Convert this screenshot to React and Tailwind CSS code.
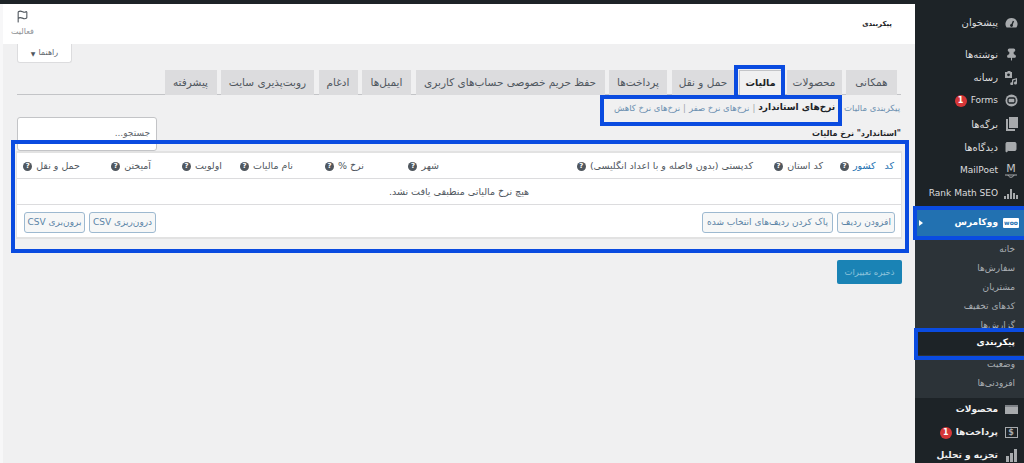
import { Flag, Pin, MessageSquare } from 'lucide-react';

const font = { fontFamily: '"DejaVu Sans", sans-serif' };

const tabs = [
  ['همکانی', 'w-[51px]'],
  ['محصولات', 'w-[55px]'],
  ['مالیات', 'w-[43px]', true],
  ['حمل و نقل', 'w-[63px]'],
  ['پرداخت‌ها', 'w-[58px]'],
  ['حفظ حریم خصوصی حساب‌های کاربری', 'w-[189px]'],
  ['ایمیل‌ها', 'w-[49px]'],
  ['ادغام', 'w-[39px]'],
  ['روبت‌پذیری سایت', 'w-[93px]'],
  ['پیشرفته', 'w-[52px]'],
];

const columns = [
  'کشور',
  'کد استان',
  'کدپستی (بدون فاصله و با اعداد انگلیسی)',
  'شهر',
  'نرخ %',
  'نام مالیات',
  'اولویت',
  'آمیختن',
  'حمل و نقل',
];

function HelpDot() {
  return (
    <span className="inline-flex size-[9px] shrink-0 items-center justify-center rounded-full bg-[#50575e] text-[7px] font-bold leading-none text-white">?</span>
  );
}

function OutlineButton({ children, className }) {
  return (
    <button className={`flex h-[21px] items-center justify-center rounded-[3px] border border-[#9db9d0] bg-[#f6f7f7] text-[9px] text-[#5b84a6] ${className}`}>
      {children}
    </button>
  );
}

function GaugeIcon() {
  return (
    <svg width="13" height="12" viewBox="0 0 13 12">
      <path d="M6.5 1A6 6 0 0 0 1.6 10.5h9.8A6 6 0 0 0 6.5 1z" fill="#a7aaad" />
      <path d="M6.5 8.5L8.5 4" stroke="#1d2327" strokeWidth="1.4" />
      <circle cx="6.5" cy="8.5" r="1.4" fill="#1d2327" />
    </svg>
  );
}

function MediaIcon() {
  return (
    <svg width="14" height="14" viewBox="0 0 14 14" fill="#a7aaad">
      <path d="M1 1h2l1-1h2l1 1h1v6H1z" />
      <circle cx="4.5" cy="3.8" r="1.4" fill="#1d2327" />
      <path d="M8 8.5l5-1.5v5a1.5 1.5 0 1 1-1.2-1.4V8.6L9.2 9.4v3.2A1.5 1.5 0 1 1 8 11.2z" />
    </svg>
  );
}

function PagesIcon() {
  return (
    <svg width="13" height="14" viewBox="0 0 13 14" fill="#a7aaad">
      <rect x="4" y="0" width="9" height="11" />
      <rect x="1" y="2" width="2" height="12" />
      <rect x="1" y="12" width="9" height="2" />
    </svg>
  );
}

function RankIcon() {
  return (
    <svg width="14" height="10" viewBox="0 0 14 10" fill="#a7aaad">
      <rect x="0" y="7" width="2" height="3" />
      <rect x="3" y="5" width="2" height="5" />
      <rect x="6" y="0" width="2" height="10" />
      <rect x="9" y="4" width="2" height="6" />
      <rect x="12" y="6" width="2" height="4" />
    </svg>
  );
}

function FormsIcon() {
  return (
    <svg width="13" height="13" viewBox="0 0 13 13">
      <circle cx="6.5" cy="6.5" r="6" fill="#a7aaad" />
      <rect x="3" y="4" width="7" height="5" rx="1.5" fill="none" stroke="#1d2327" strokeWidth="1.3" />
    </svg>
  );
}

function MailPoetIcon() {
  return (
    <span className="flex flex-col items-center text-[11px] leading-[11px] text-[#c3c4c7]">
      M
      <svg width="14" height="4" viewBox="0 0 14 4" fill="none" stroke="#a7aaad">
        <path d="M1 1h12M4 1c1 3 5 3 6 0" />
      </svg>
    </span>
  );
}

function MenuRow({ icon, label, className = 'h-[23.2px]', badge, bold, latin }) {
  return (
    <div
      dir="rtl"
      className={`flex shrink-0 items-center ${bold ? 'text-[9px] font-bold text-[#f0f0f1]' : latin ? 'text-[9px] text-[#dcdcde]' : 'text-[10px] text-[#dcdcde]'} ${className}`}
    >
      <span className="flex w-[26px] shrink-0 items-center justify-center text-[#a7aaad]">{icon}</span>
      <span className="whitespace-nowrap">{label}</span>
      {badge && (
        <span className="mr-[4px] flex size-[12px] items-center justify-center rounded-full bg-[#d63638] text-[8px] leading-none font-bold text-white">{badge}</span>
      )}
    </div>
  );
}

function SubRow({ label, active }) {
  return (
    <div
      dir="rtl"
      className={`flex shrink-0 items-center pr-[9px] text-[9px] ${active ? '-mt-[4px] h-[24px] bg-[#1d2327] font-bold text-white' : 'h-[19px] text-[#a9aeb3]'}`}
    >
      {label}
    </div>
  );
}

function Sidebar() {
  return (
    <aside className="relative flex h-full w-[109px] shrink-0 flex-col bg-[#1d2327] pt-[7px]">
      <MenuRow icon={<GaugeIcon />} label="پیشخوان" className="mb-[9px] h-[23px]" />
      <MenuRow icon={<Pin size={13} fill="#a7aaad" />} label="نوشته‌ها" />
      <MenuRow icon={<MediaIcon />} label="رسانه" />
      <MenuRow icon={<FormsIcon />} label="Forms" badge="1" latin />
      <MenuRow icon={<PagesIcon />} label="برگه‌ها" />
      <MenuRow icon={<MessageSquare size={12} fill="#a7aaad" />} label="دیدگاه‌ها" />
      <MenuRow icon={<MailPoetIcon />} label="MailPoet" latin />
      <MenuRow icon={<RankIcon />} label="Rank Math SEO" latin />
      <div dir="rtl" className="relative mt-[3.6px] flex h-[28px] shrink-0 items-center bg-[#2271b1] text-[9px] font-bold text-white">
        <span className="flex w-[26px] justify-center">
          <span className="rounded-[1px] bg-white px-[1px] text-[6px] leading-[10px] font-bold text-[#2271b1]">woo</span>
        </span>
        ووکامرس
        <span className="absolute left-[4px] top-[11px] size-0 border-y-[3px] border-l-[4px] border-y-transparent border-l-white" />
      </div>
      <div className="flex h-[161px] shrink-0 flex-col bg-[#2c3338] pt-[3px]">
        <SubRow label="خانه" />
        <SubRow label="سفارش‌ها" />
        <SubRow label="مشتریان" />
        <SubRow label="کدهای تخفیف" />
        <SubRow label="گزارش‌ها" />
        <SubRow label="پیکربندی" active />
        <SubRow label="وضعیت" />
        <SubRow label="افزودنی‌ها" />
      </div>
      <MenuRow
        icon={<span className="block h-[9px] w-[13px] border-t-[2px] border-[#7d8186] bg-[#a7aaad]" />}
        label="محصولات"
        className="h-[23px]"
        bold
      />
      <MenuRow
        icon={<span className="flex h-[11px] w-[13px] items-center justify-center border border-[#a7aaad] text-[8px] leading-none">$</span>}
        label="پرداخت‌ها"
        badge="1"
        bold
      />
      <MenuRow
        icon={
          <svg width="13" height="13" viewBox="0 0 13 13" fill="#a7aaad">
            <rect x="1" y="7" width="3" height="6" />
            <rect x="5" y="4" width="3" height="9" />
            <rect x="9" y="0" width="3" height="13" />
          </svg>
        }
        label="تجزیه و تحلیل"
        bold
      />
    </aside>
  );
}

function Main() {
  return (
    <main dir="rtl" className="flex h-full min-w-0 flex-1 flex-col bg-[#f0f0f1]">
      <header className="flex h-[40px] shrink-0 items-center justify-between bg-white pl-[8px] pr-[23px]">
        <span className="text-[7px] font-bold text-[#1d2327]">پیکربندی</span>
        <div className="flex flex-col items-center text-[#8c8f94]">
          <Flag size={13} color="#50575e" />
          <span className="mt-[3px] text-[8px]">فعالیت</span>
        </div>
      </header>

      <div className="flex justify-end pl-[14px]">
        <div className="flex h-[19px] w-[55px] items-center justify-center gap-[3px] rounded-b-[3px] border border-t-0 border-[#dcdcde] bg-white text-[8px] text-[#646970]">
          راهنما
          <span className="text-[6px] text-[#50575e]">▼</span>
        </div>
      </div>

      <nav className="mr-[14px] ml-[14px] mt-[7px] flex h-[25px] shrink-0 gap-[4.5px] border-b border-[#c3c4c7] pr-[4px]">
        {tabs.map(([label, width, active]) => (
          <div
            key={label}
            className={`flex h-[25px] items-center justify-center whitespace-nowrap border border-b-0 ${width} ${
              active ? 'border-[#c3c4c7] bg-[#f0f0f1] text-[9.5px] font-bold text-[#1d2327]' : 'border-[#dcdcde] bg-[#dcdcde] text-[10.5px] text-[#50575e]'
            }`}
          >
            {label}
          </div>
        ))}
      </nav>

      <div className="mt-[6px] flex h-[14px] items-center gap-[3px] whitespace-nowrap pr-[15px] text-[8.5px] text-[#6b8fb0]">
        <span>پیکربندی مالیات</span>
        <span className="text-[#a0a5aa]">|</span>
        <span className="text-[9px] font-bold text-[#1d2327]">نرخ‌های استاندارد</span>
        <span className="text-[#a0a5aa]">|</span>
        <span>نرخ‌های نرخ صفر</span>
        <span className="text-[#a0a5aa]">|</span>
        <span>نرخ‌های نرخ کاهش</span>
      </div>

      <div className="mr-[14px] ml-[14px] mt-[2px] flex h-[34px] shrink-0 items-start justify-between">
        <h2 className="mt-[11px] text-[8px] font-bold leading-[12px] text-[#1d2327]">"استاندارد" نرخ مالیات</h2>
        <div className="flex h-[34px] w-[140px] items-start rounded-[3px] border border-[#c3c4c7] bg-white pr-[6px] pt-[9px] text-[9px] text-[#646970]">
          جستجو...
        </div>
      </div>

      <section className="mr-[13px] ml-[13px] h-[88px] shrink-0 border-x border-y-2 border-[#e2e2e2] bg-white text-[9.5px] text-[#50575e]">
        <div className="grid h-[26px] grid-cols-[71px_70px_314px_75px_71px_71px_71px_71px_1fr] items-center border-b border-[#dcdcde] pr-[7px] pt-[1px]">
          {columns.map((col, i) => (
            <div key={col} className="flex items-center gap-[4px] whitespace-nowrap">
              {i === 0 && <span className="ml-[5px] text-[#2271b1]">کد</span>}
              <span className={i === 0 ? 'text-[#2271b1]' : ''}>{col}</span>
              <HelpDot />
            </div>
          ))}
        </div>
        <div className="flex h-[26px] items-center justify-center border-b border-[#dcdcde] pt-[2px]">
          هیچ نرخ مالیاتی منطبقی یافت نشد.
        </div>
        <div className="flex h-[32px] items-start justify-between pl-[7px] pr-[6px] pt-[7px]">
          <div className="flex gap-[4px]">
            <OutlineButton className="w-[58px]">افزودن ردیف</OutlineButton>
            <OutlineButton className="w-[131px]">پاک کردن ردیف‌های انتخاب شده</OutlineButton>
          </div>
          <div className="flex gap-[4px]">
            <OutlineButton className="w-[67px]">درون‌ریزی CSV</OutlineButton>
            <OutlineButton className="w-[61px]">برون‌بری CSV</OutlineButton>
          </div>
        </div>
      </section>

      <div className="mr-[13px] mt-[21px] flex h-[24px] w-[65px] shrink-0 items-center justify-center rounded-[2px] bg-[#1a83b5] text-[8.5px] text-[#8ec3dc]">
        ذخیره تغییرات
      </div>
    </main>
  );
}

export default function App() {
  return (
    <div style={font} className="relative h-[463px] w-[1024px] overflow-hidden bg-[#f0f0f1]">
      <div className="h-[4px] bg-[#1d2327]" />
      <div className="flex h-[459px]">
        <div className="w-[3px] shrink-0 bg-[#f7f7f8]" />
        <Main />
        <Sidebar />
      </div>

      {/* blue annotation frames over the screenshot */}
      <div className="absolute left-[11px] top-[140px] h-[113px] w-[898px] border-[4px] border-[#0a4be0]" />
      <div className="absolute left-[734px] top-[65px] h-[32px] w-[51px] border-[4px] border-b-0 border-[#0a4be0]" />
      <div className="absolute left-[600px] top-[95px] h-[31px] w-[242px] border-[4px] border-[#0a4be0]" />
      <div className="absolute left-[913px] top-[206px] h-[34px] w-[111px] border-[4px] border-r-0 border-[#0a4be0]" />
      <div className="absolute left-[914px] top-[328px] h-[32px] w-[110px] border-[4px] border-r-0 border-[#0a4be0]" />
    </div>
  );
}
